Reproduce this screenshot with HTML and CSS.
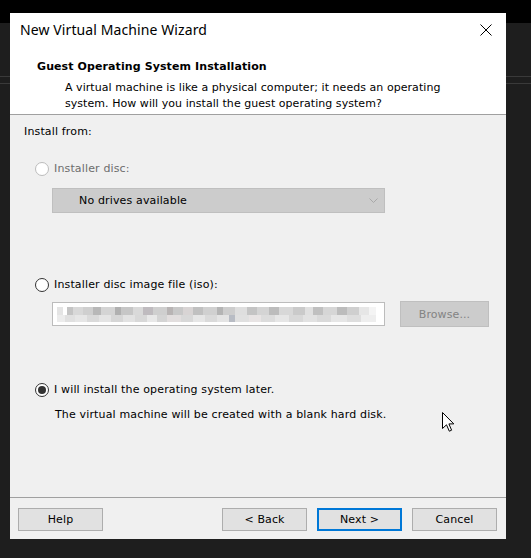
FILE: index.html
```html
<!DOCTYPE html>
<html lang="en">
<head>
<meta charset="utf-8">
<title>New Virtual Machine Wizard</title>
<link rel="stylesheet" href="styles.css">
</head>
<body>
<div class="dialog">
  <div class="titlebar">
    <span class="title">New Virtual Machine Wizard</span>
    <svg class="close" width="12" height="12" viewBox="0 0 12 12"><path d="M0.5 0.5 L11.5 11.5 M11.5 0.5 L0.5 11.5" stroke="#000" stroke-width="1" fill="none"/></svg>
  </div>
  <div class="header">
    <div class="h-title">Guest Operating System Installation</div>
    <div class="h-desc">A virtual machine is like a physical computer; it needs an operating<br>system. How will you install the guest operating system?</div>
  </div>
  <div class="content">
    <div class="label">Install from:</div>
    <div class="option option-disc disabled"><span class="radio"></span><span>Installer disc:</span></div>
    <div class="combo combo-disabled">
      <span class="combo-text">No drives available</span>
      <svg class="chev" width="9" height="5" viewBox="0 0 9 5"><path d="M0.5 0.5 L4.5 4.5 L8.5 0.5" stroke="#a8a8a8" fill="none"/></svg>
    </div>
    <div class="option option-iso"><span class="radio"></span><span>Installer disc image file (iso):</span></div>
    <div class="iso-row">
      <div class="combo combo-iso"><div class="blur"></div></div>
      <div class="btn btn-disabled">Browse...</div>
    </div>
    <div class="option option-later"><span class="radio checked"></span><span>I will install the operating system later.</span></div>
    <div class="note">The virtual machine will be created with a blank hard disk.</div>
    <svg class="cursor" width="13" height="21" viewBox="0 0 13 21"><path d="M0.5 0.5 L0.5 16.5 L4.5 12.8 L7.3 19.2 L9.6 18.2 L6.9 11.9 L11.8 11.9 Z" fill="#fff" stroke="#000" stroke-width="1" stroke-linejoin="miter"/></svg>
  </div>
  <div class="footer">
    <div class="btn">Help</div>
    <div class="spacer"></div>
    <div class="btn">&lt; Back</div>
    <div class="btn btn-default">Next &gt;</div>
    <div class="btn">Cancel</div>
  </div>
</div>
</body>
</html>
```
FILE: styles.css
```css
html, body {
  margin: 0;
  padding: 0;
}
body {
  width: 531px;
  height: 558px;
  overflow: hidden;
  padding: 13px 0 0 10px;
  box-sizing: border-box;
  background: linear-gradient(to bottom,
    #000 0 23px,
    #1e1e1e 23px 76px,
    #3a3a3a 76px 77px,
    #1e1e1e 77px 83px,
    #3a3a3a 83px 84px,
    #1e1e1e 84px);
  font-family: "DejaVu Sans", "Liberation Sans", sans-serif;
  font-size: 11px;
  letter-spacing: 0.15px;
  color: #000;
}
.dialog {
  width: 496px;
  height: 526px;
  background: #f0f0f0;
  display: flex;
  flex-direction: column;
}
.titlebar {
  height: 34px;
  flex: none;
  background: #fff;
  display: flex;
  align-items: center;
  justify-content: space-between;
  padding: 0 14px 0 10px;
}
.title {
  font-family: "Noto Sans", "Open Sans", sans-serif;
  font-size: 14px;
  letter-spacing: 0.1px;
  line-height: 20px;
  color: #000;
}
.close {
  display: block;
}
.header {
  flex: none;
  background: #fff;
  height: 54px;
  border-bottom: 1px solid #a0a0a0;
  padding-top: 13px;
}
.h-title {
  font-weight: bold;
  line-height: 13px;
  padding-left: 27px;
  letter-spacing: 0.1px;
}
.h-desc {
  margin-top: 7px;
  padding-left: 55px;
  line-height: 16px;
  letter-spacing: 0.05px;
}
.content {
  position: relative;
  flex: 1;
  padding: 10px 0 0 14px;
  border-bottom: 1px solid #a0a0a0;
}
.label {
  line-height: 13px;
}
.option {
  display: flex;
  align-items: center;
  gap: 5px;
  margin-left: 11px;
  line-height: 14px;
}
.option-disc { margin-top: 24px; }
.option-iso { margin-top: 65px; }
.option-later { margin-top: 56px; }
.disabled { color: #6d6d6d; }
.radio {
  width: 14px;
  height: 14px;
  box-sizing: border-box;
  border: 1px solid #333;
  border-radius: 50%;
  background: #fff;
  flex: none;
  display: flex;
  align-items: center;
  justify-content: center;
}
.disabled .radio {
  border-color: #bcbcbc;
}
.radio.checked::after {
  content: "";
  width: 8px;
  height: 8px;
  border-radius: 50%;
  background: #333;
}
.combo {
  width: 333px;
  height: 25px;
  box-sizing: border-box;
  margin-left: 28px;
  display: flex;
  align-items: center;
}
.combo-disabled {
  margin-top: 12px;
  background: #cccccc;
  border: 1px solid #bfbfbf;
  padding: 0 6px 0 26px;
  justify-content: space-between;
}
.chev { display: block; }
.iso-row {
  display: flex;
  align-items: center;
  gap: 15px;
  margin-top: 9px;
}
.combo-iso {
  height: 24px;
  background: #fff;
  border: 1px solid #bcbcbc;
  padding: 0 8px 0 4px;
}
.blur {
  width: 320px;
  height: 15px;
  background:
    linear-gradient(90deg,
      #e4e4e4 0 6px, #ffffff 6px 10px, #c4c4c4 10px 16px, #d8d8d8 16px 26px, #cfcfcf 26px 36px,
      #b8b8b8 36px 44px, #d4d4d4 44px 58px, #b0b0b0 58px 64px, #c6c6c6 64px 76px, #d9d9d9 76px 86px,
      #bfbbbf 86px 96px, #cfcfcf 96px 110px, #b8b4b4 110px 116px, #c8c8c8 116px 126px, #d8d4d4 126px 136px,
      #c0c0c0 136px 146px, #d0d0d0 146px 160px, #b4b4b4 160px 166px, #cdcdcd 166px 178px, #dedede 178px 190px,
      #c4c4c4 190px 200px, #d4d4d4 200px 212px, #bcbcbc 212px 222px, #d8d8d8 222px 236px, #cacaca 236px 248px,
      #e0e0e0 248px 256px, #c0c0c0 256px 266px, #d6d6d6 266px 280px, #bcbcbc 280px 290px, #cfcfcf 290px 302px,
      #e6e6e6 302px 312px, #f4f4f4 312px 320px) top / 100% 8px no-repeat,
    linear-gradient(90deg,
      #ececec 0 8px, #e0e0e0 8px 18px, #e6e6e6 18px 30px, #dadada 30px 42px, #e4e4e4 42px 54px,
      #d6d6d6 54px 66px, #e2e2e2 66px 78px, #d8d8d8 78px 90px, #e8e8e8 90px 100px, #d4d4d4 100px 110px,
      #e2dede 110px 124px, #d8d8d8 124px 136px, #e6e6e6 136px 148px, #dadada 148px 160px, #e4e4e4 160px 172px,
      #b8bcc4 172px 178px, #e0e0e0 178px 192px, #e8e4e4 192px 204px, #dcdcdc 204px 218px, #e6e6e6 218px 232px,
      #d8d8d8 232px 246px, #e2e2e2 246px 260px, #dadada 260px 274px, #e6e6e6 274px 290px, #dedede 290px 304px,
      #eeeeee 304px 320px) bottom / 100% 7px no-repeat;
}
.btn {
  width: 85px;
  height: 23px;
  box-sizing: border-box;
  background: #e1e1e1;
  border: 1px solid #adadad;
  display: flex;
  align-items: center;
  justify-content: center;
  letter-spacing: 0.1px;
  flex: none;
}
.btn-disabled {
  width: 89px;
  height: 26px;
  background: #cccccc;
  border-color: #bfbfbf;
  color: #838383;
}
.btn-default {
  border: 2px solid #0078d7;
}
.note {
  margin-top: 11px;
  margin-left: 31px;
  line-height: 14px;
}
.cursor {
  position: absolute;
  left: 432px;
  top: 297px;
}
.footer {
  flex: none;
  height: 41px;
  box-sizing: border-box;
  display: flex;
  padding: 10px 9px 0 8px;
  gap: 10px;
}
.spacer { flex: 1; }
```
